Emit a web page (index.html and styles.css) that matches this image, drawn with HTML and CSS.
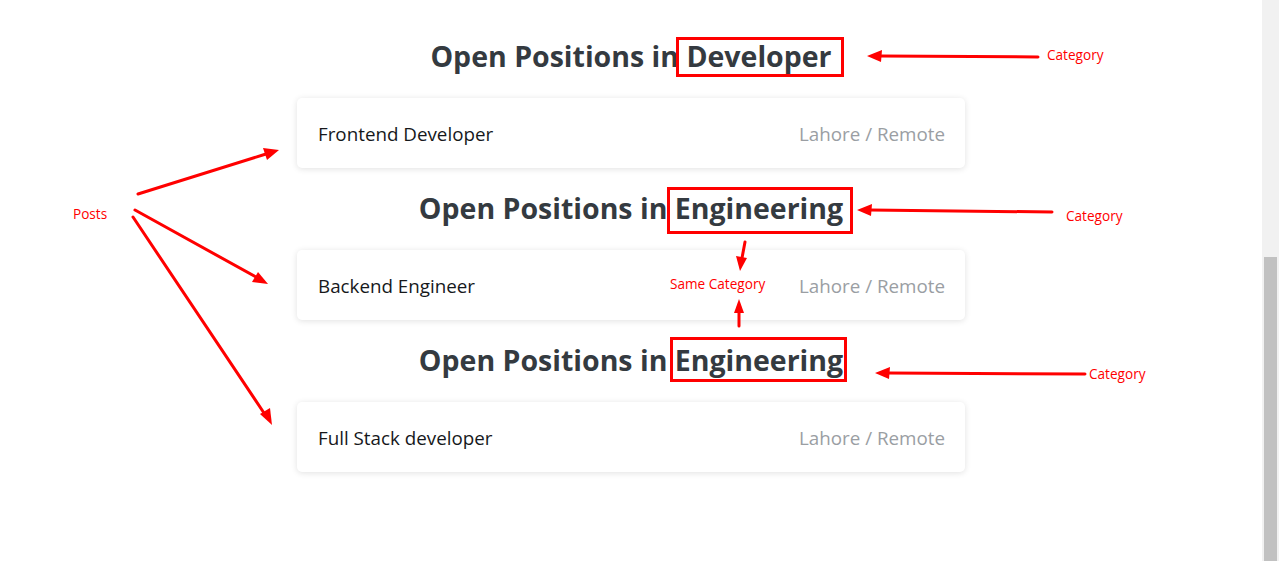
FILE: index.html
```html
<!DOCTYPE html>
<html>
<head>
<meta charset="utf-8">
<link rel="stylesheet" href="styles.css">
</head>
<body>
<div class="page">
  <div class="content">
    <div class="list">
      <h2 class="heading">Open Positions in <span class="cat">Developer</span></h2>
      <div class="card"><span class="title">Frontend Developer</span><span class="loc">Lahore / Remote</span></div>
      <h2 class="heading">Open Positions in <span class="cat">Engineering</span></h2>
      <div class="card"><span class="title">Backend Engineer</span><span class="loc">Lahore / Remote</span></div>
      <h2 class="heading">Open Positions in <span class="cat">Engineering</span></h2>
      <div class="card"><span class="title">Full Stack developer</span><span class="loc">Lahore / Remote</span></div>
    </div>

    <div class="annot">
      <div class="box box1"></div>
      <div class="box box2"></div>
      <div class="box box3"></div>
      <span class="label lbl-cat1">Category</span>
      <span class="label lbl-cat2">Category</span>
      <span class="label lbl-cat3">Category</span>
      <span class="label lbl-posts">Posts</span>
      <span class="label lbl-same">Same Category</span>
      <svg class="arrows" width="1262" height="561" viewBox="0 0 1262 561">
        <g stroke="#ff0000" stroke-width="3" stroke-linecap="round" fill="none">
          <line x1="1038" y1="57" x2="880" y2="56"/>
          <line x1="1052" y1="212" x2="870" y2="210"/>
          <line x1="1085" y1="374" x2="888" y2="373"/>
          <line x1="138" y1="194" x2="266" y2="154"/>
          <line x1="135" y1="210" x2="256" y2="277"/>
          <line x1="133" y1="217" x2="264" y2="413"/>
          <line x1="745" y1="242" x2="742" y2="258"/>
          <line x1="739" y1="326" x2="739" y2="312"/>
        </g>
        <g fill="#ff0000">
          <polygon points="867,56 882,50 881,62"/>
          <polygon points="857,210 872,204 871,216"/>
          <polygon points="875,373 890,367 889,379"/>
          <polygon points="279,150 263,148 267,160"/>
          <polygon points="268,284 252,282 258,272"/>
          <polygon points="272,425 260,414 270,408"/>
          <polygon points="740,271 736,256 747,258"/>
          <polygon points="739,299 734,313 744,313"/>
        </g>
      </svg>
    </div>
  </div>
  <div class="scrollbar"><div class="thumb"></div></div>
</div>
</body>
</html>
```

FILE: styles.css
```css
html, body {
  margin: 0;
  padding: 0;
  overflow: hidden;
  background: #ffffff;
}

.page {
  display: flex;
  width: 1279px;
  height: 561px;
}

.content {
  position: relative;
  flex: 1;
  height: 561px;
}

.list {
  width: 668px;
  margin: 0 auto;
  padding-top: 36px;
  display: flex;
  flex-direction: column;
}

.heading {
  margin: 0 0 22px 0;
  height: 40px;
  line-height: 40px;
  text-align: center;
  font-family: "Open Sans", "Noto Sans", sans-serif;
  font-weight: 700;
  font-size: 28.5px;
  color: #343a40;
}

.card + .heading {
  margin-top: 20px;
}

.card {
  height: 70px;
  box-sizing: border-box;
  padding: 2px 20px 0 21px;
  display: flex;
  align-items: center;
  justify-content: space-between;
  background: #ffffff;
  border-radius: 5px;
  box-shadow: 0 1px 6px rgba(0, 0, 0, 0.12);
  font-family: "Open Sans", "Noto Sans", sans-serif;
  font-size: 18.8px;
}

.title {
  color: #16181b;
}

.loc {
  color: #9a9ea3;
}

.annot {
  position: absolute;
  left: 0;
  top: 0;
  width: 1262px;
  height: 561px;
  pointer-events: none;
}

.arrows {
  position: absolute;
  left: 0;
  top: 0;
}

.box {
  position: absolute;
  border: 3px solid #ff0000;
  box-sizing: border-box;
}

.box1 { left: 676px; top: 37px; width: 168px; height: 40px; }
.box2 { left: 667px; top: 187px; width: 186px; height: 47px; }
.box3 { left: 670px; top: 337px; width: 177px; height: 45px; }

.label {
  position: absolute;
  font-family: "Open Sans", "Noto Sans", sans-serif;
  font-size: 13.6px;
  color: #ff0000;
  line-height: 16px;
  white-space: nowrap;
}

.lbl-cat1 { left: 1047px; top: 47px; }
.lbl-cat2 { left: 1066px; top: 208px; }
.lbl-cat3 { left: 1089px; top: 366px; }
.lbl-posts { left: 73px; top: 206px; }
.lbl-same { left: 670px; top: 276px; }

.scrollbar {
  width: 17px;
  height: 561px;
  background: #f1f1f1;
  display: flex;
  flex-direction: column;
  align-items: center;
}

.thumb {
  margin-top: 257px;
  width: 13px;
  height: 304px;
  background: #c1c1c1;
}
```
